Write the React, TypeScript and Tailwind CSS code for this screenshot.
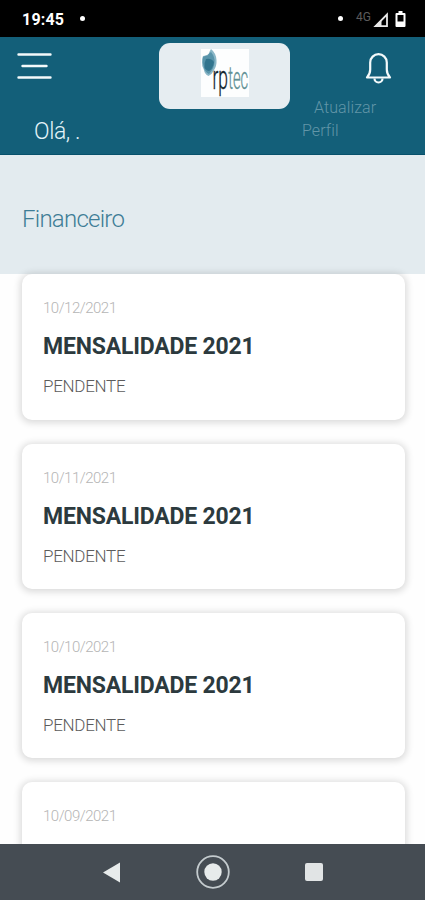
import React from 'react';

type Payment = {
  date: string;
  title: string;
  status: string;
};

const payments: Payment[] = [
  { date: '10/12/2021', title: 'MENSALIDADE 2021', status: 'PENDENTE' },
  { date: '10/11/2021', title: 'MENSALIDADE 2021', status: 'PENDENTE' },
  { date: '10/10/2021', title: 'MENSALIDADE 2021', status: 'PENDENTE' },
  { date: '10/09/2021', title: 'MENSALIDADE 2021', status: 'PENDENTE' },
];

function StatusBar() {
  return (
    <div className="flex h-[37px] shrink-0 items-center bg-black pl-[22px] pr-[19px] text-white">
      <span className="text-base font-bold leading-none tracking-[0.2px] pt-0.5">19:45</span>
      <span className="ml-4 h-[5px] w-[5px] rounded-full bg-white" />
      <span className="ml-auto h-[5px] w-[5px] rounded-full bg-white" />
      <span className="ml-[13px] -mt-1 text-xs leading-none text-[#5c5c5c]">4G</span>
      <svg className="ml-[2px] h-4 w-4 mt-0.5" viewBox="0 0 16 16" fill="none">
        <path d="M2.500 14.2 14 2.500v11.700z" stroke="#e8e8e8" strokeWidth="1.800" />
        <path d="M1 15 8.500 7.500V15z" fill="#e8e8e8" />
      </svg>
      <svg className="ml-[6px] h-4 w-[11px]" viewBox="0 0 11 16">
        <path d="M3.5 0h4v2h2q1 0 1 1v12q0 1-1 1h-8q-1 0-1-1V3q0-1 1-1h2z" fill="#fff" />
        <path d="M2.5 4h6v6.5h-6z" fill="#000" />
      </svg>
    </div>
  );
}

function Logo() {
  return (
    <div className="flex h-[66px] w-[131px] justify-center rounded-[11px] bg-[#e6edf1] pt-[6px]">
      <svg className="h-12 w-12 bg-[#fdfefe]" viewBox="0 0 48 48">
        <path d="M10 0Q15 4 15.500 11q.5 6-3 11-2 4-5 5-4-2-4.500-6-2.500-4-2-8 0-4 1-6 3-1 5 0 1-4 3-7z" fill="#8ab7c7" />
        <path d="M2 8q5-2 8-5 4 5 3.500 10 0 6-5.500 12-4-2-5-6-2-5-1-11z" fill="#4b8ba3" opacity=".8" />
        <path d="M5 10q5-1 8 3-1 7-5 9-4-1-4.500-4-.5-4 1.500-8z" fill="#286b86" opacity=".8" />
        <text x="11.500" y="40" fontFamily="Roboto" fontWeight="300" fontSize="34" fill="#12242e" stroke="#12242e" strokeWidth=".4" textLength="15.500" lengthAdjust="spacingAndGlyphs">rp</text>
        <text x="27.200" y="40" fontFamily="Roboto" fontWeight="300" fontSize="31" fill="#5f9094" stroke="#5f9094" strokeWidth=".3" textLength="20" lengthAdjust="spacingAndGlyphs">tec</text>
      </svg>
    </div>
  );
}

function Header() {
  return (
    <header className="flex h-[118px] shrink-0 justify-between border-b border-[#07516b] bg-[#135f79]">
      <div className="w-[159px]">
        <svg className="ml-[17px] mt-[15px] h-7 w-[35px]" viewBox="0 0 35 28" stroke="#f4fafb" strokeWidth="2.400" strokeLinecap="round">
          <path d="M1.500 2.500h32M5.500 14h24M1.500 25.500h32" />
        </svg>
        <p className="ml-[34px] mt-[38px] text-[23px] font-light leading-7 tracking-[-0.4px] text-[#e2f3f8]">Olá, .</p>
      </div>
      <div className="pt-[6px]">
        <Logo />
      </div>
      <div className="w-[135px]">
        <svg className="ml-[75px] mt-[15px] block h-8 w-7" viewBox="0 0 28 32" fill="none" stroke="#f4fafb" strokeWidth="2.200" strokeLinejoin="round">
          <path d="M2 25.500q3.200-3.500 3.200-8V10.500a8.300 8.300 0 0 1 16.600 0v7q0 4.500 3.200 8z" />
          <path d="M9.500 26.500a4 4 0 0 0 8 0" />
        </svg>
        <p className="ml-[12px] mt-[12px] indent-[12px] text-base font-light leading-[23px] tracking-[0.1px] text-[#6296a8]">
          Atualizar
          <br />
          Perfil
        </p>
      </div>
    </header>
  );
}

function PaymentCard({ date, title, status }: Payment) {
  return (
    <div className="h-[145.500px] shrink-0 rounded-[10px] bg-white px-[21px] pt-6 shadow-[0_1px_7px_2px_rgba(0,0,0,0.14)]">
      <p className="text-[15px] font-light leading-5 tracking-[-0.5px] text-[#b5b5b5]">{date}</p>
      <h2 className="mt-[15px] text-[23px] font-bold leading-7 tracking-[-0.2px] text-[#2c3a3e]">{title}</h2>
      <p className="mt-[15px] text-[17px] font-light leading-5 tracking-[-0.3px] text-[#5c5c5c]">{status}</p>
    </div>
  );
}

function NavigationBar() {
  return (
    <nav className="flex h-14 shrink-0 items-center bg-[#454c53] pl-[102px]">
      <svg className="h-[21px] w-[19px]" viewBox="0 0 19 21">
        <path d="M18 .5v20L1 10.500z" fill="#e7ebeb" />
      </svg>
      <svg className="ml-[75px] h-[34px] w-[34px]" viewBox="0 0 34 34">
        <circle cx="17" cy="17" r="15.800" fill="none" stroke="#c4cbce" strokeWidth="1.800" />
        <circle cx="17" cy="17" r="8.700" fill="#e7ebeb" />
      </svg>
      <span className="ml-[74.500px] h-[18px] w-[18px] rounded-[2px] bg-[#e1e4e5]" />
    </nav>
  );
}

export default function App() {
  return (
    <div className="flex h-[900px] w-[425px] flex-col overflow-hidden bg-[#fefefe] font-['Roboto',sans-serif]">
      <StatusBar />
      <Header />
      <main className="min-h-0 flex-1 overflow-hidden">
        <div className="h-[119px] bg-[#e3ebef] pl-[22px] pt-[48px]">
          <h1 className="text-[24px] font-light leading-8 tracking-[-0.75px] text-[#3e7d96]">Financeiro</h1>
        </div>
        <div className="flex flex-col gap-[23.750px] pl-[22px] pr-5 pt-[0.250px]">
          {payments.map((payment) => (
            <PaymentCard key={payment.date} {...payment} />
          ))}
        </div>
      </main>
      <NavigationBar />
    </div>
  );
}
